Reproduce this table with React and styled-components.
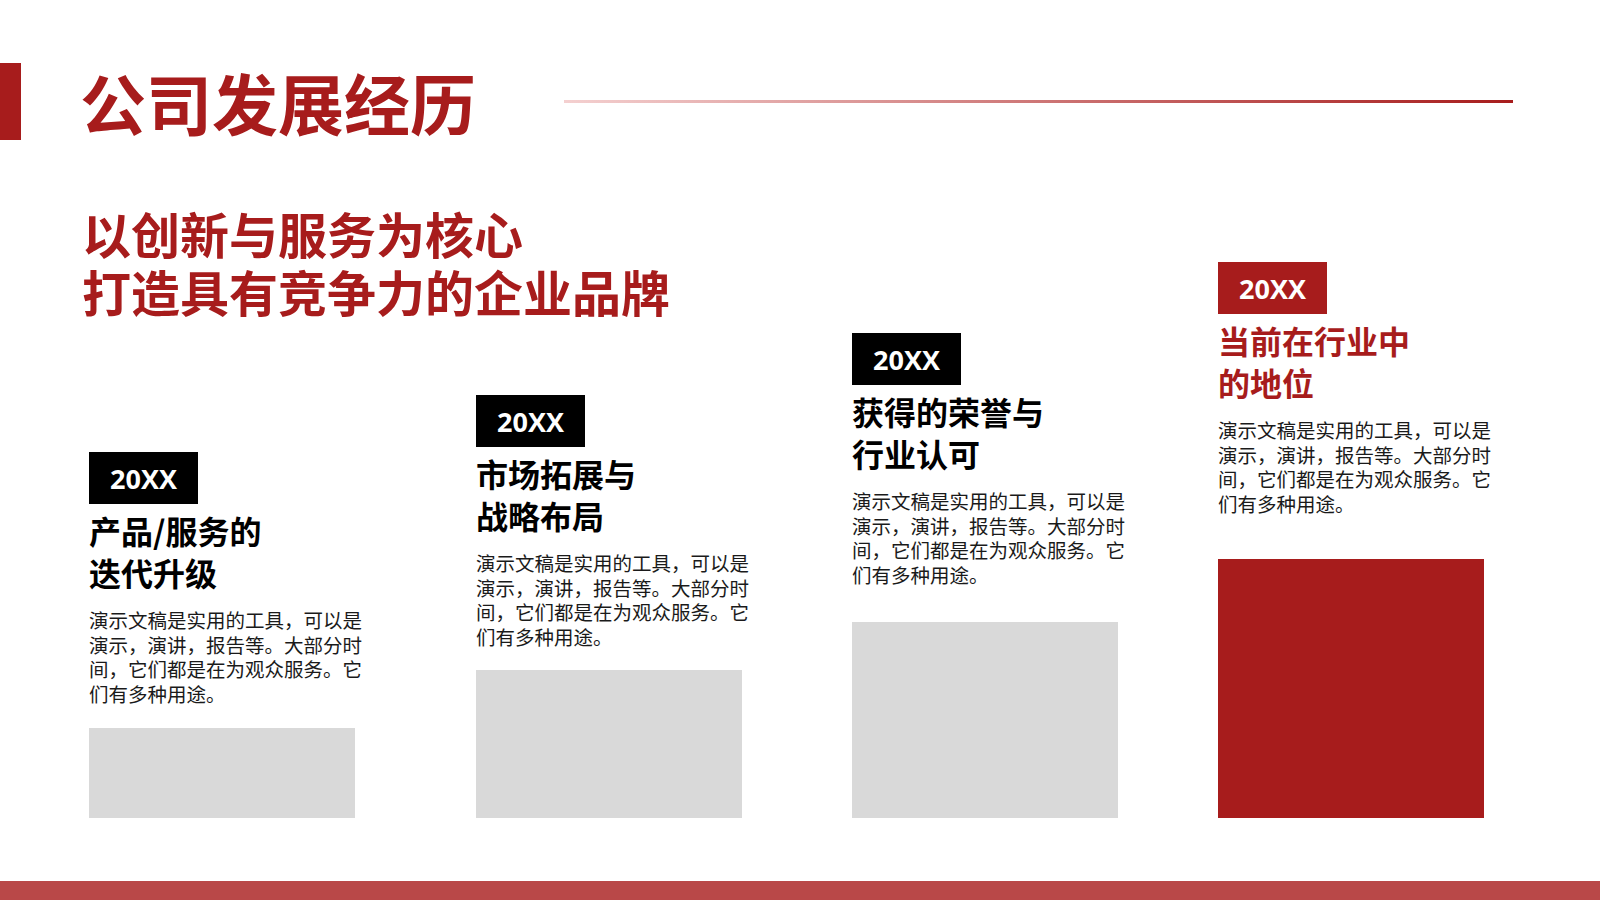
import React from 'react'
import styled, { createGlobalStyle } from 'styled-components'

const GlobalStyle = createGlobalStyle`
  html, body {
    margin: 0;
    padding: 0;
    background: #ffffff;
  }
  body {
    font-family: 'Noto Sans CJK SC', 'Noto Sans', sans-serif;
  }
`

const RED = '#a71c1c'

const Slide = styled.div`
  width: 1600px;
  height: 900px;
  display: flex;
  flex-direction: column;
  overflow: hidden;
  background: #ffffff;
`

const Header = styled.header`
  display: flex;
  align-items: center;
  margin-top: 63px;
  height: 77px;
  flex-shrink: 0;
`

const Marker = styled.div`
  width: 21px;
  height: 77px;
  background: ${RED};
`

const Title = styled.h1`
  margin: 0 0 0 59px;
  font-size: 66px;
  line-height: 77px;
  font-weight: 700;
  color: ${RED};
  white-space: nowrap;
`

const Rule = styled.div`
  width: 949px;
  height: 3px;
  margin-left: auto;
  margin-right: 87px;
  background: linear-gradient(to right, #f4d0d0, ${RED});
`

/* slogan and the staircase share one cell: the last step rises beside the slogan */
const Main = styled.main`
  flex: 1;
  display: grid;
  grid-template: 1fr / 1fr;
  min-height: 0;
`

const Slogan = styled.h2`
  grid-area: 1 / 1;
  align-self: start;
  margin: 64px 0 0 82px;
  font-size: 49px;
  line-height: 58px;
  font-weight: 700;
  color: ${RED};
`

const Timeline = styled.section`
  grid-area: 1 / 1;
  align-self: end;
  display: grid;
  grid-template-columns: 387px 376px 366px 266px;
  align-items: end;
  padding-left: 89px;
  margin-bottom: 63px;
`

const Step = styled.div`
  display: flex;
  flex-direction: column;
`

const Year = styled.div`
  width: 109px;
  height: 52px;
  display: flex;
  align-items: center;
  justify-content: center;
  background: ${(p) => (p.$accent ? RED : '#000000')};
  color: #ffffff;
  font-family: 'Open Sans', 'Noto Sans', sans-serif;
  font-weight: 700;
  font-size: 27px;
`

const StepTitle = styled.h3`
  margin: 5px 0 0;
  font-size: 32px;
  line-height: 42px;
  font-weight: 700;
  color: ${(p) => (p.$accent ? RED : '#000000')};
`

const StepText = styled.p`
  margin: 15px 0 0;
  width: 280px;
  font-size: 19.5px;
  line-height: 24.5px;
  color: #1a1a1a;
`

const Block = styled.div`
  width: 266px;
  height: ${(p) => p.$height}px;
  margin-top: ${(p) => p.$gap}px;
  background: ${(p) => (p.$accent ? RED : '#d9d9d9')};
`

const Footer = styled.footer`
  height: 19px;
  flex-shrink: 0;
  background: #b94848;
`

const text = '演示文稿是实用的工具，可以是演示，演讲，报告等。大部分时间，它们都是在为观众服务。它们有多种用途。'

const steps = [
  { title: ['产品/服务的', '迭代升级'], height: 90, gap: 22 },
  { title: ['市场拓展与', '战略布局'], height: 148, gap: 21 },
  { title: ['获得的荣誉与', '行业认可'], height: 196, gap: 35 },
  { title: ['当前在行业中', '的地位'], height: 259, gap: 43, accent: true },
]

const App = () => {
  return (
    <Slide>
      <GlobalStyle />
      <Header>
        <Marker />
        <Title>公司发展经历</Title>
        <Rule />
      </Header>
      <Main>
        <Slogan>
          以创新与服务为核心
          <br />
          打造具有竞争力的企业品牌
        </Slogan>
        <Timeline>
          {steps.map((s, i) => (
            <Step key={i}>
              <Year $accent={s.accent}>20XX</Year>
              <StepTitle $accent={s.accent}>
                {s.title[0]}
                <br />
                {s.title[1]}
              </StepTitle>
              <StepText>{text}</StepText>
              <Block $height={s.height} $gap={s.gap} $accent={s.accent} />
            </Step>
          ))}
        </Timeline>
      </Main>
      <Footer />
    </Slide>
  )
}

export default App
